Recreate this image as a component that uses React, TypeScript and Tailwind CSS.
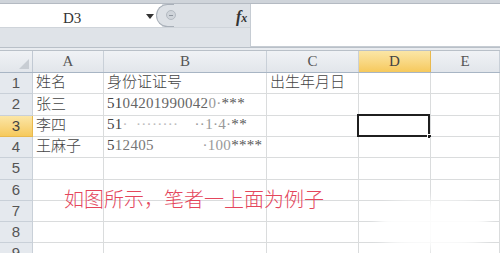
import React from "react";

const cols = [
  { key: "A", w: "w-[71px]" },
  { key: "B", w: "w-[163px]" },
  { key: "C", w: "w-[92px]" },
  { key: "D", w: "w-[72px]" },
  { key: "E", w: "flex-1" },
];

const rowHeights = [
  "h-[21px]",
  "h-[22px]",
  "h-[21px]",
  "h-[21px]",
  "h-[22px]",
  "h-[21px]",
  "h-[21px]",
  "h-[21px]",
  "h-[21px]",
];

const cjk = "font-['Noto_Sans_CJK_SC',sans-serif] font-light";

function IdCell({ row }: { row: number }) {
  if (row === 2)
    return (
      <span className="font-['Liberation_Serif',serif] text-[15px] tracking-[0.3px] text-[#444]">
        <span>51</span>
        <span className="text-[#666]">04201990042</span>
        <span className="text-[#999]">0·</span>
        <span className="text-[#555]">***</span>
      </span>
    );
  if (row === 3)
    return (
      <span className="font-['Liberation_Serif',serif] text-[15px] tracking-[0.3px] text-[#444] whitespace-pre">
        <span>51</span>
        <span className="text-[#bbb]">·  ········    </span>
        <span className="text-[#999]">··1·4·</span>
        <span className="text-[#555]">**</span>
      </span>
    );
  return (
    <span className="font-['Liberation_Serif',serif] text-[15px] tracking-[0.3px] text-[#444] whitespace-pre">
      <span>5</span>
      <span className="text-[#777]">12405</span>
      <span>{"            "}</span>
      <span className="text-[#999]">·100</span>
      <span className="text-[#555]">****</span>
    </span>
  );
}

function cellContent(row: number, col: string) {
  const names: Record<number, string> = { 1: "姓名", 2: "张三", 3: "李四", 4: "王麻子" };
  if (col === "A" && names[row])
    return <span className={`${cjk} text-[15px] text-[#444]`}>{names[row]}</span>;
  if (col === "B" && row === 1)
    return <span className={`${cjk} text-[15px] text-[#444]`}>身份证证号</span>;
  if (col === "B" && row >= 2 && row <= 4) return <IdCell row={row} />;
  if (col === "C" && row === 1)
    return <span className={`${cjk} text-[15px] text-[#444]`}>出生年月日</span>;
  return null;
}

export default function App() {
  return (
    <div className="relative w-[500px] h-[253px] overflow-hidden bg-white">
      {/* Toolbar / formula bar */}
      <div className="h-[4px] bg-[#cfd4da] border-b border-[#b4bac2]" />
      <div className="flex h-[43px] bg-[#dfe3e8]">
        <div className="w-[250px] flex flex-col">
          <div className="flex h-[23px]">
            <div className="w-[162px] bg-white flex items-center relative">
              <span className="absolute left-[63px] top-[3px] font-['Liberation_Serif',serif] text-[15px] text-[#333]">
                D3
              </span>
              <svg className="absolute left-[146px] top-[10px]" width="8" height="5" viewBox="0 0 8 5">
                <path d="M0 0 L8 0 L4 5 Z" fill="#333" />
              </svg>
            </div>
            <div className="flex-1 relative bg-[#dde1e6]">
              <div className="absolute -left-[6px] top-0 w-[18px] h-[23px] rounded-l-full bg-[#dde1e6] border-l border-t border-b border-[#a9b0b9]" />
              <div className="absolute left-[4px] top-[6px] w-[10px] h-[10px] rounded-full bg-[#cfd4da] border border-[#b4bac2] flex items-center justify-center">
                <div className="w-[4px] h-px bg-[#8e959e]" />
              </div>
              <span className="absolute left-[74px] top-[1px] font-['Liberation_Serif',serif] italic font-bold text-[16px] text-[#333]">
                f<span className="text-[12px]">x</span>
              </span>
            </div>
          </div>
          <div className="flex-1 bg-[#dfe3e8] border-t border-[#cfd4da]" />
        </div>
        <div className="flex-1 bg-white border-l border-[#aab1ba] border-b border-[#c6ccd3]" />
      </div>
      <div className="h-[4px] bg-[#e9ecf0] border-t border-[#a3aab3] border-b border-[#b9c0c8]" />

      {/* Column headers */}
      <div className="flex h-[22px] border-b border-[#a8b5c4]">
        <div className="w-[33px] border-r border-[#c1c9d3] bg-gradient-to-b from-[#f0f2f5] to-[#e2e6eb] relative">
          <svg className="absolute right-[3px] bottom-[3px]" width="10" height="10" viewBox="0 0 10 10">
            <path d="M10 0 L10 10 L0 10 Z" fill="#c8cdd3" />
          </svg>
        </div>
        {cols.map((c) => (
          <div
            key={c.key}
            className={`${c.w} flex items-center justify-center border-r font-['Liberation_Serif',serif] text-[15px] ${
              c.key === "D"
                ? "bg-gradient-to-b from-[#fbe6a6] to-[#f6c95b] border-[#e9b94e] text-[#444]"
                : "bg-gradient-to-b from-[#f0f2f5] to-[#e2e6eb] border-[#c9d0d8] text-[#555]"
            }`}
          >
            {c.key}
          </div>
        ))}
      </div>

      {/* Rows */}
      {rowHeights.map((h, i) => {
        const row = i + 1;
        const sel = row === 3;
        return (
          <div key={row} className={`flex ${h}`}>
            <div
              className={`w-[33px] flex items-center justify-center border-r border-b font-['Liberation_Sans',sans-serif] text-[15px] ${
                sel
                  ? "bg-gradient-to-b from-[#fbe6a6] to-[#f6c95b] border-[#e9b94e] text-[#444]"
                  : "bg-[#e5e9ee] border-[#c9d0d8] text-[#555]"
              }`}
            >
              {row}
            </div>
            {cols.map((c) => (
              <div
                key={c.key}
                className={`${c.w} relative flex items-end pl-[3px] pb-[1px] border-r border-b border-[#dadcdd] overflow-visible whitespace-nowrap`}
              >
                {cellContent(row, c.key)}
                {sel && c.key === "D" && (
                  <div className="absolute -left-[2px] -top-[2px] w-[73px] h-[23px] border-2 border-[#1f1f1f]">
                    <div className="absolute -right-[4px] -bottom-[4px] w-[5px] h-[5px] bg-[#1f1f1f] border border-white" />
                  </div>
                )}
              </div>
            ))}
          </div>
        );
      })}

      {/* Red annotation text */}
      <div className={`absolute left-[64px] top-[187px] ${cjk} text-[20px] leading-[24px] text-[#e4465c] whitespace-nowrap`}>
        如图所示，笔者一上面为例子
      </div>

      {/* Watermark blob */}
      <div className="absolute left-[378px] top-[200px] w-[110px] h-[50px] rounded-[40%] bg-white/90 blur-[6px]" />
    </div>
  );
}
